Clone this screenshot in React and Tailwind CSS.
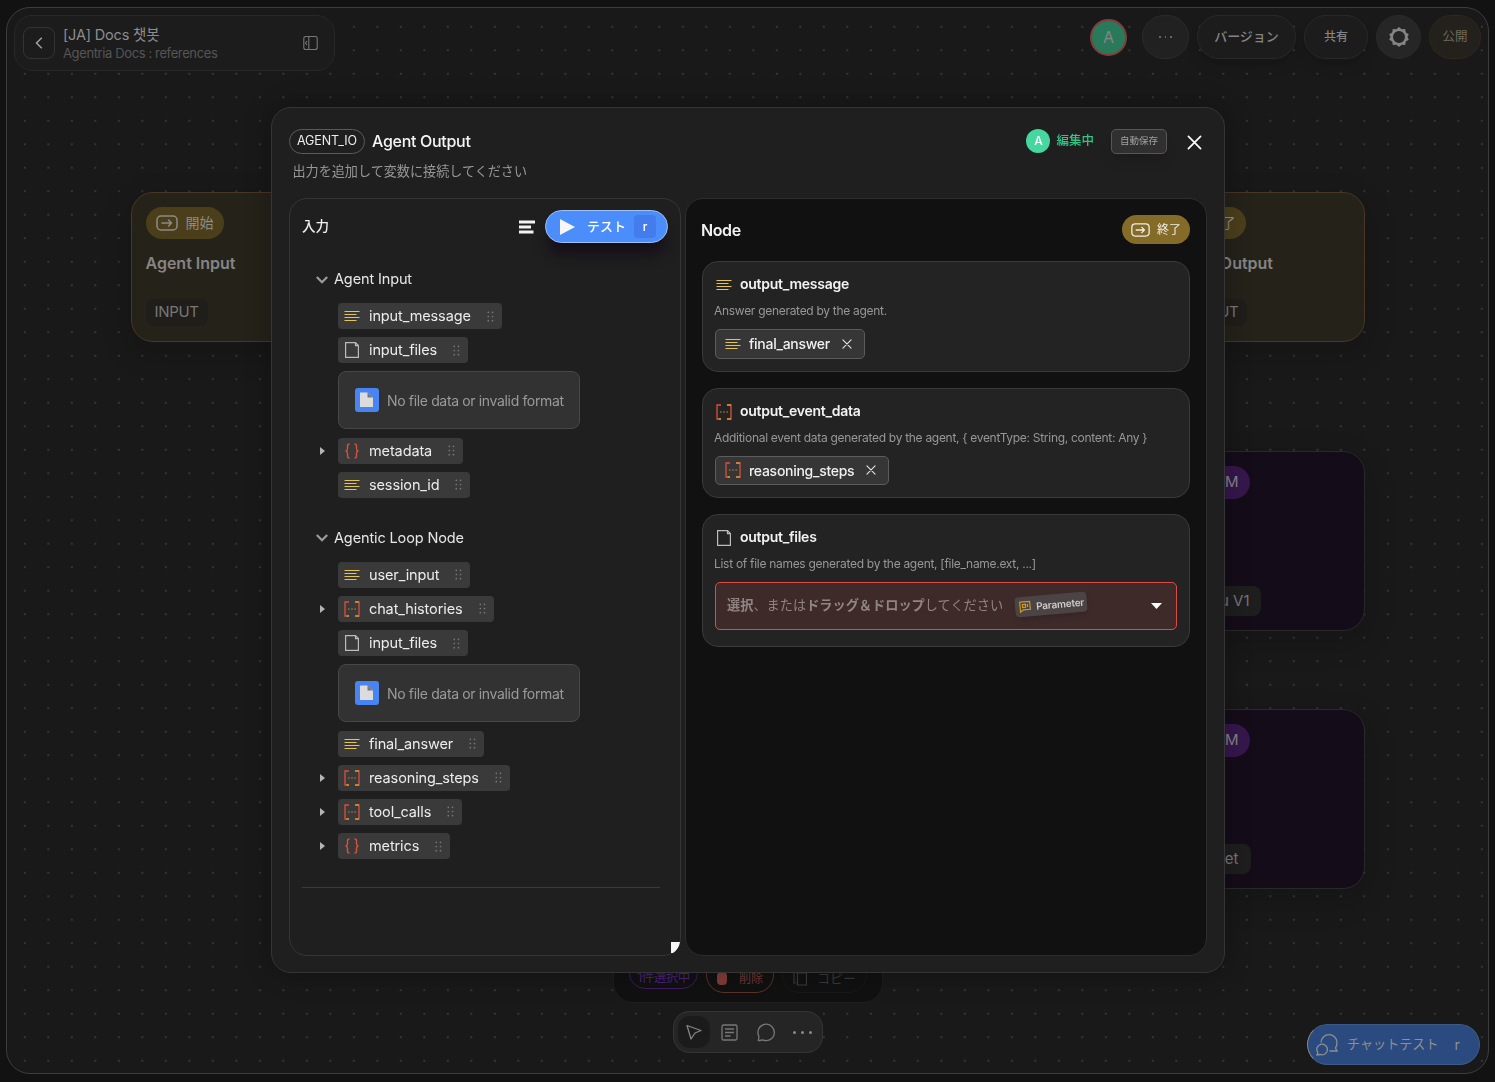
import clsx from 'clsx';

const inputGroups = [
  {
    title: 'Agent Input',
    items: [
      { name: 'input_message', type: 'string' },
      { name: 'input_files', type: 'file' },
      { name: 'metadata', type: 'object', expandable: true },
      { name: 'session_id', type: 'string' },
    ],
  },
  {
    title: 'Agentic Loop Node',
    items: [
      { name: 'user_input', type: 'string' },
      { name: 'chat_histories', type: 'array', expandable: true },
      { name: 'input_files', type: 'file' },
      { name: 'final_answer', type: 'string' },
      { name: 'reasoning_steps', type: 'array', expandable: true },
      { name: 'tool_calls', type: 'array', expandable: true },
      { name: 'metrics', type: 'object', expandable: true },
    ],
  },
];

const outputs = [
  {
    name: 'output_message',
    type: 'string',
    description: 'Answer generated by the agent.',
    value: 'final_answer',
  },
  {
    name: 'output_event_data',
    type: 'array',
    description: 'Additional event data generated by the agent, { eventType: String, content: Any }',
    value: 'reasoning_steps',
  },
  {
    name: 'output_files',
    type: 'file',
    description: 'List of file names generated by the agent, [file_name.ext, ...]',
  },
];

const TypeIcon = ({ type }) => {
  if (type === 'string') {
    return (
      <svg className="h-4 w-4 shrink-0" viewBox="0 0 16 16" stroke="#e8c352" strokeWidth="1.2">
        <path d="M.5 3.500h15M.5 6.500h12M.5 9.500h15M.5 12.500h12" />
      </svg>
    );
  }
  if (type === 'file') {
    return (
      <svg className="h-4 w-4 shrink-0" viewBox="0 0 16 16" fill="none" stroke="#bcbcbc" strokeWidth="1.2">
        <path d="M1.600 .6h9.900l2.900 2.900v11.900H1.600zM11.500 .8v2.800h2.700" />
      </svg>
    );
  }
  if (type === 'object') {
    return (
      <svg className="h-4 w-4 shrink-0" viewBox="0 0 16 16" fill="none" stroke="#d9503c" strokeWidth="1.4">
        <path d="M5.500 1C3.800 1 3.500 1.600 3.500 3v2.800c0 1.200-.6 1.900-1.800 2.200 1.200.3 1.800 1 1.800 2.200V13c0 1.400.3 2 2 2M10.500 1c1.700 0 2 .6 2 2v2.800c0 1.200.6 1.900 1.800 2.200-1.200.3-1.800 1-1.800 2.200V13c0 1.400-.3 2-2 2" />
      </svg>
    );
  }
  return (
    <svg className="h-4 w-4 shrink-0" viewBox="0 0 16 16" fill="none">
      <path d="M5 1H1v14h4M11 1h4v14h-4" stroke="#d9503c" strokeWidth="1.3" />
      <path d="M11 1h4M2.500 15H5M11 15h4" stroke="#d3922f" strokeWidth="1.3" />
      <path d="M4 8h1.600M7.200 8h1.600M10.400 8H12" stroke="#b98a35" strokeWidth="1.2" />
    </svg>
  );
};

const ArrowBox = ({ className }) => (
  <svg className={className} viewBox="0 0 22 16" fill="none" stroke="currentColor" strokeWidth="1.5" strokeLinecap="round" strokeLinejoin="round">
    <rect x="1" y="1" width="20" height="14" rx="4" />
    <path d="M6 8h9.500M12.500 5l3 3-3 3" />
  </svg>
);

const CloseIcon = ({ className }) => (
  <svg className={className} viewBox="0 0 16 16" stroke="currentColor" strokeLinecap="round">
    <path d="M1.500 1.500l13 13M14.500 1.500l-13 13" />
  </svg>
);

const DragDots = () => (
  <svg className="h-[11px] w-[7px]" viewBox="0 0 7 11" fill="#777">
    <circle cx="1.300" cy="1.300" r=".85" />
    <circle cx="5.500" cy="1.300" r=".85" />
    <circle cx="1.300" cy="5.500" r=".85" />
    <circle cx="5.500" cy="5.500" r=".85" />
    <circle cx="1.300" cy="9.700" r=".85" />
    <circle cx="5.500" cy="9.700" r=".85" />
  </svg>
);

const InputItem = ({ item }) => (
  <>
    <div className="flex h-[26px] items-center">
      <div className="flex w-[22px] shrink-0">
        {item.expandable && (
          <svg className="ml-[4px] h-2 w-[5px]" viewBox="0 0 5 8" fill="#b5b5b5">
            <path d="M0 0l5 4-5 4z" />
          </svg>
        )}
      </div>
      <div className="flex h-[26px] items-center rounded bg-[#3a3a3a] pr-[8px] pl-[6px]">
        <TypeIcon type={item.type} />
        <span className="ml-[9px] text-[14.5px] tracking-[-0.12px] text-[#ececec]">{item.name}</span>
        <span className="ml-4">
          <DragDots />
        </span>
      </div>
    </div>
    {item.type === 'file' && (
      <div className="ml-[22px] flex h-[58px] w-[242px] items-center rounded-lg border border-[#474747] bg-[#323232] pl-4">
        <svg className="h-6 w-6 shrink-0" viewBox="0 0 24 24">
          <rect width="24" height="24" rx="3" fill="#4884f2" />
          <path d="M5 4.500h7.500l5.500 5v9.500H5z" fill="#dcdcdc" />
          <path d="M12.500 4.500l5.500 5h-5.500z" fill="#777" />
        </svg>
        <span className="ml-2 text-[14px] tracking-tight text-[#9a9a9a]">No file data or invalid format</span>
      </div>
    )}
  </>
);

const OutputCard = ({ output }) => (
  <div className="rounded-2xl border border-[#3a3a3a] bg-[#232323] px-3 pt-[12px] pb-[12px]">
    <div className="flex h-5 items-center gap-2 pt-0.5 pl-px">
      <TypeIcon type={output.type} />
      <span className="-mt-0.5 text-[14px] leading-5 font-semibold tracking-[-0.26px] text-[#f2f2f2]">{output.name}</span>
    </div>
    <p className="mt-[9px] -ml-px text-[12px] leading-4 tracking-[-0.29px] text-[#979797]">{output.description}</p>
    {output.value ? (
      <div className="mt-[10px] flex h-[29.5px] w-fit items-center rounded-[5px] border border-[#5c5c5c] bg-[#363636] pr-3 pl-[9px]">
        <TypeIcon type={output.type} />
        <span className="ml-2 text-[14px] font-medium tracking-[-0.28px] text-[#f0f0f0]">{output.value}</span>
        <CloseIcon className="ml-3 h-[10px] w-[10px] stroke-[1.8] text-[#e4e4e4]" />
      </div>
    ) : (
      <div className="mt-[10px] mb-1 flex h-12 items-center rounded-[5px] border border-[#dc4c44] bg-[#3f2a2a] pr-3 pl-[11px]">
        <span className="text-[13.2px] whitespace-nowrap text-[#8f8583]">
          <b>選択</b>、または<b>ドラッグ＆ドロップ</b>してください
        </span>
        <span className="ml-3 flex h-5 w-[72px] -translate-y-[1.5px] -rotate-5 items-center gap-[5px] rounded bg-[#4a4444] pl-[4px] text-[10px] font-semibold tracking-[-0.2px] text-[#cfcaca] shadow-md">
          <svg className="h-3 w-3 shrink-0" viewBox="0 0 12 12" fill="none" stroke="#c99b25" strokeWidth="1.2">
            <path d="M1 1h10v8H4l-3 2z" />
            <path d="M3.500 3.500h3v3h-3zM8.500 3.500v3" />
          </svg>
          Parameter
        </span>
        <svg className="mr-[2px] ml-auto h-[6px] w-[11px]" viewBox="0 0 11 6" fill="#fff">
          <path d="M0 0h11L5.500 6z" />
        </svg>
      </div>
    )}
  </div>
);

const FlowNode = ({ className, label, title, tag, variant }) => (
  <div
    className={clsx(
      'absolute flex w-[320px] flex-col items-start rounded-[22px] border px-[14px] pt-[14px] shadow-[0_10px_24px_8px_rgba(0,0,0,0.12)]',
      variant === 'io' ? 'h-[150px] border-[#4a3624] bg-[#25221a]' : 'h-[180px] border-[#292929] bg-[#150c19]',
      className
    )}
  >
    {label}
    {title}
    {tag}
  </div>
);

const Header = () => (
  <header className="flex items-start justify-between px-[7px] pt-[7px]">
    <div className="flex h-14 w-[321px] items-center rounded-[18px] border border-[#282828] bg-[#1c1c1c] px-2">
      <button className="flex h-8 w-8 items-center justify-center rounded-lg border border-[#343434]">
        <svg className="h-3 w-2" viewBox="0 0 8 12" fill="none" stroke="#a0a0a0" strokeWidth="1.5">
          <path d="M6.800.8L1.500 6l5.300 5.200" />
        </svg>
      </button>
      <div className="ml-2 pt-px">
        <div className="text-[14.5px] leading-[19px] tracking-[-0.18px] text-[#8c8c8c]">[JA] Docs 챗봇</div>
        <div className="text-[13px] leading-[18px] tracking-[-0.38px] text-[#555]">Agentria Docs : references</div>
      </div>
      <svg className="mr-2 ml-auto h-[15px] w-[15px]" viewBox="0 0 15 15" fill="none" stroke="#777" strokeWidth="1.1">
        <rect x=".8" y=".5" width="13.400" height="13" rx="2" />
        <path d="M5.800 .5v13M4 5L2.500 7 4 9" />
      </svg>
    </div>
    <div className="flex h-11 items-center text-[13px] text-[#858585]">
      <div className="flex h-[37px] w-[37px] items-center justify-center rounded-full border-2 border-[#843c3c] bg-[#287a5a] text-[16px]">A</div>
      <button className="ml-[15px] flex h-11 w-[47px] items-center justify-center gap-1 rounded-full border border-[#2b2b2b] bg-[#212121]">
        <i className="h-[1.5px] w-[1.5px] bg-[#666]" />
        <i className="h-[1.5px] w-[1.5px] bg-[#666]" />
        <i className="h-[1.5px] w-[1.5px] bg-[#666]" />
      </button>
      <button className="ml-2 h-11 w-[99px] rounded-full border border-[#292929] bg-[#1c1c1c] font-medium shadow-lg">バージョン</button>
      <button className="ml-2 h-11 w-16 rounded-full border border-[#292929] bg-[#1c1c1c] text-[12px] font-medium shadow-lg">共有</button>
      <button className="ml-2 flex h-11 w-[45px] items-center justify-center rounded-full border border-[#2a2a2a] bg-[#262626]">
        <svg className="h-5 w-5" viewBox="0 0 20 20" fill="#848484">
          <path
            fillRule="evenodd"
            d="M10 0l2.700 2.300 3.500-.4.600 3.500L19.800 7.300 18.500 10l1.300 2.700-3 1.900-.6 3.500-3.500-.4L10 20l-2.700-2.300-3.500.4-.6-3.500-3-1.900L1.500 10 .2 7.300l3-1.900.6-3.500 3.500.4zM10 4a6 6 0 100 12 6 6 0 000-12z"
          />
        </svg>
      </button>
      <button className="ml-2 h-11 w-[52px] rounded-full border border-[#32261f] bg-[#23211c] text-[12.5px] text-[#6f6a5c]">公開</button>
    </div>
  </header>
);

const Canvas = () => (
  <div className="relative h-[1067px] w-[1483px] overflow-hidden rounded-[24px] border border-[#3d3d3d] bg-[#191919] bg-[radial-gradient(circle,#363636_0.9px,transparent_1.2px)] bg-[size:23.51px_23.51px] bg-[position:6.1px_7px]">
    <FlowNode
      className="top-[184px] left-[123.5px]"
      variant="io"
      label={
        <div className="flex h-8 w-[78px] items-center gap-2 rounded-full bg-[#4b3f1b] pl-[10px] text-[14px] text-[#8d8b86]">
          <ArrowBox className="h-4 w-[22px]" />
          <span className="-mt-0.5">開始</span>
        </div>
      }
      title={<div className="mt-[12px] text-[16px] leading-6 font-semibold text-[#858585]">Agent Input</div>}
      tag={<div className="mt-[24px] flex h-[27px] items-center rounded-lg bg-[#1f1e1a] px-[9px] text-[15px] tracking-[-0.3px] text-[#777]">INPUT</div>}
    />
    <FlowNode
      className="top-[184px] left-[1037.5px]"
      variant="io"
      label={
        <div className="ml-[108px] flex h-8 w-[78px] items-center gap-2 rounded-full bg-[#4b3f1b] pl-[10px] text-[14px] text-[#8d8b86]">
          <ArrowBox className="h-4 w-[22px]" />
          <span className="-mt-0.5">終了</span>
        </div>
      }
      title={<div className="mt-[12px] ml-[110px] text-[16px] leading-6 font-semibold whitespace-nowrap text-[#858585]">Agent Output</div>}
      tag={<div className="mt-[24px] ml-[109px] flex h-[27px] items-center rounded-lg bg-[#1f1e1a] px-[9px] text-[15px] tracking-[-0.3px] text-[#777]">OUTPUT</div>}
    />
    <FlowNode
      className="top-[443px] left-[1037.5px]"
      variant="llm"
      label={<div className="ml-[108px] flex h-[33px] w-[82px] items-center justify-end rounded-full bg-[#36174d] pr-[11px] text-[15px] text-[#858585]">LLM</div>}
      tag={<div className="mt-[87px] ml-[108px] flex h-[30px] w-[93px] items-center justify-end rounded-lg bg-[#1f1e1f] pr-[11px] text-[15px] text-[#777]">Haiku V1</div>}
    />
    <FlowNode
      className="top-[701px] left-[1037.5px]"
      variant="llm"
      label={<div className="ml-[108px] flex h-[33px] w-[82px] items-center justify-end rounded-full bg-[#36174d] pr-[11px] text-[15px] text-[#858585]">LLM</div>}
      tag={<div className="mt-[87px] ml-[108px] flex h-[30px] w-[83px] items-center justify-end rounded-lg bg-[#1f1e1f] pr-[12px] text-[15px] text-[#777]">Sonnet</div>}
    />

    <Header />

    {/* Selection actions */}
    <div className="absolute top-[934px] left-[606px] flex h-[61px] w-[270px] items-center gap-2 rounded-[20px] border border-[#1e1e1e] bg-[#111] pl-[15px] text-[13px]">
      <div className="flex h-8 w-[69px] items-center justify-center rounded-full border border-[#42195f] pt-3 text-[12.5px] tracking-[-0.5px] text-[#4b2478]">1件選択中</div>
      <div className="mt-1 flex h-9 w-[68px] items-center justify-center gap-3 rounded-full border border-[#5c342a] pt-2 text-[12px] text-[#743936]">
        <i className="h-[13px] w-[10px] rounded-sm bg-[#823c3a]" />
        削除
      </div>
      <div className="mt-1 flex h-9 w-[85px] items-center justify-center gap-2.5 rounded-full border border-[#191919] pt-2 text-[13px] text-[#383838]">
        <svg className="h-[14px] w-[14px]" viewBox="0 0 14 14" fill="none" stroke="#3b3b3b" strokeWidth="1.2">
          <path d="M4.500 1h9v12h-9zM1 0v11h2" />
        </svg>
        コピー
      </div>
    </div>

    {/* Canvas tools */}
    <div className="absolute top-[1003px] left-[666px] flex h-[42px] w-[150px] items-center rounded-[16px] border border-[#353535] bg-[#252525] pl-1">
      <div className="flex h-8 w-8 items-center justify-center rounded-xl bg-[#1b1b1b]">
        <svg className="h-4 w-4" viewBox="0 0 16 16" fill="none" stroke="#858585" strokeWidth="1.3" strokeLinejoin="round">
          <path d="M1 1.500l14 5-6 2.500-4 6z" />
        </svg>
      </div>
      <svg className="ml-[11px] h-[17px] w-[17px]" viewBox="0 0 17 17" fill="none" stroke="#777" strokeWidth="1.3">
        <rect x="1" y="1" width="15" height="15" rx="1.500" />
        <path d="M4 5h9M4 8.500h9M4 12h5.500" />
      </svg>
      <svg className="ml-[19px] h-[19px] w-[19px]" viewBox="0 0 19 19" fill="none" stroke="#777" strokeWidth="1.3" strokeLinejoin="round">
        <path d="M2.500 17.500L1.300 17.500 2 13.500A8.200 8.200 0 115.500 16.800z" />
      </svg>
      <div className="ml-[17px] flex gap-[5px]">
        <i className="h-[3px] w-[3px] rounded-full bg-[#888]" />
        <i className="h-[3px] w-[3px] rounded-full bg-[#888]" />
        <i className="h-[3px] w-[3px] rounded-full bg-[#888]" />
      </div>
    </div>

    <button className="absolute top-[1016px] left-[1300px] flex h-[41px] w-[173px] items-center rounded-full border border-[#3d5a88] border-l-[#8a8a85] bg-[#2a4a80] pl-[8px] text-[14px] text-[#8d908f]">
      <svg className="h-[22px] w-[22px]" viewBox="0 0 22 22" fill="none" stroke="currentColor" strokeWidth="1.3">
        <path d="M5 8.500A8 7.800 0 0 1 21 8.500Q21 11.500 19.500 14L21 17H13.500" />
        <path d="M1 21L1.800 18.500A5.300 5.300 0 1 1 4.500 20.500Z" />
      </svg>
      <span className="ml-[9px] text-[13.1px]">チャットテスト</span>
      <span className="ml-[16px]">r</span>
    </button>
  </div>
);

const AgentOutputModal = () => (
  <div className="fixed inset-0 flex items-start pt-[107px] pl-[271px]">
    <div className="flex h-[866px] w-[954px] flex-col rounded-[20px] border border-[#353535] bg-[#1f1f1f] px-[17px] pt-[20px] shadow-[0_0_24px_4px_rgba(0,0,0,0.22)]">
      <div className="flex h-[26px] items-center">
        <span className="flex h-[25px] w-[76px] items-center justify-center rounded-full border border-[#5a5a5a] text-[12.5px] tracking-[-0.1px] text-[#ececec]">AGENT_IO</span>
        <h2 className="ml-[7px] text-[16px] font-medium tracking-[-0.3px] text-[#f4f4f4]">Agent Output</h2>
        <div className="ml-auto flex h-6 w-6 items-center justify-center rounded-full bg-[#46d6a0] text-[12px] font-medium text-white">A</div>
        <span className="ml-[6px] text-[12.5px] font-medium text-[#32c589]">編集中</span>
        <button className="ml-[17px] h-[25px] w-14 rounded-[5px] border border-[#5a5656] bg-[#303030] text-[9.5px] text-[#a0a0a0] shadow-lg">自動保存</button>
        <CloseIcon className="mt-0.5 mr-[5px] ml-5 h-[15px] w-[15px] stroke-[1.8] text-white" />
      </div>
      <p className="mt-[7px] ml-[3.5px] text-[13.1px] leading-5 text-[#979797]">出力を追加して変数に接続してください</p>

      <div className="mt-[17px] flex gap-1">
        <section className="relative h-[758px] w-[392px] rounded-[18px] border border-[#353535] px-3 pt-[11px]">
          <div className="flex h-[33px] items-center">
            <h3 className="text-[13.5px] font-medium text-[#eee]">入力</h3>
            <svg className="mt-px mr-px ml-auto h-[14px] w-[17px]" viewBox="0 0 17 14" stroke="#f3f3f3" strokeWidth="2.8">
              <path d="M1 2h16M1 7h12M1 12h14.500" />
            </svg>
            <button className="ml-[9px] flex h-[33px] w-[123px] items-center rounded-full border border-[#9fc1f6] bg-[#4b8efb] pl-[14px] text-white shadow-[0_14px_14px_-3px_#160e19]">
              <svg className="h-4 w-[15px]" viewBox="0 0 15 16" fill="#f6f6f6">
                <path d="M0 0l15 8-15 8z" />
              </svg>
              <span className="ml-3 text-[13px] font-medium">テスト</span>
              <span className="ml-2 flex h-[23px] w-[22px] items-center justify-center rounded bg-[#437cec] text-[12px] font-medium">r</span>
            </button>
          </div>

          <div className="mt-[28px] ml-[14px] flex flex-col gap-8 pb-[28px]">
            {inputGroups.map((group) => (
              <div key={group.title}>
                <div className="-mt-1 flex h-6 items-center">
                  <svg className="mt-px h-2 w-3" viewBox="0 0 12 8" fill="none" stroke="#9c9c9c" strokeWidth="2.2">
                    <path d="M.8 1L6 6.300 11.200 1" />
                  </svg>
                  <span className="ml-[6px] text-[14.5px] tracking-[-0.13px] text-[#e6e6e6]">{group.title}</span>
                </div>
                <div className="mt-3 flex flex-col gap-[8.2px]">
                  {group.items.map((item, i) => (
                    <InputItem key={i} item={item} />
                  ))}
                </div>
              </div>
            ))}
          </div>
          <hr className="mr-2 border-[#3a3a3a]" />
          <svg className="absolute right-0 bottom-[2px] h-[11px] w-[9px]" viewBox="0 0 9 11" fill="#f5f5f5">
            <path d="M0 0h9Q8 7 2 11H0z" />
          </svg>
        </section>

        <section className="h-[758px] w-[522px] rounded-[18px] border border-[#2d2d2d] bg-[#111] px-4 pt-4">
          <div className="flex h-[29px] items-center justify-between">
            <h3 className="-ml-px text-[16px] font-semibold tracking-[-0.4px] text-[#f2f2f2]">Node</h3>
            <div className="flex h-[29px] w-[68px] items-center rounded-full bg-[#856b28] pl-[9px] text-[12px] text-[#f0eee8]">
              <ArrowBox className="mr-[7px] h-[14px] w-[19px]" />
              終了
            </div>
          </div>
          <div className="mt-[17px] flex flex-col gap-4">
            {outputs.map((output) => (
              <OutputCard key={output.name} output={output} />
            ))}
          </div>
        </section>
      </div>
    </div>
  </div>
);

const App = () => {
  return (
    <div className="h-[1082px] w-[1495px] overflow-hidden bg-[#121212] pt-[7px] pl-[6px] font-['Inter','Noto_Sans_CJK_JP','Noto_Sans_CJK_KR',sans-serif]">
      <Canvas />
      <AgentOutputModal />
    </div>
  );
};

export default App;
